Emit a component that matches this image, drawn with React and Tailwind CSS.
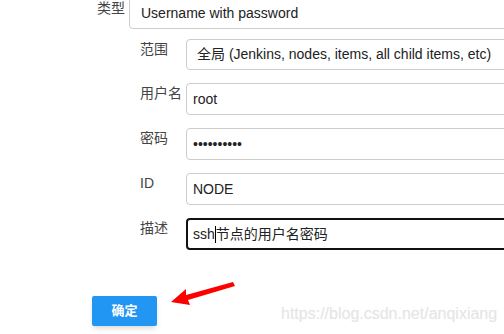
import React from "react";

const FieldRow = ({ label, children, boxClass = "", height = "h-[32px]" }) => {
  return (
    <div className="flex items-start">
      <div className="w-[46px] shrink-0 text-[14px] leading-[20px] text-[#444]">{label}</div>
      <div
        className={`w-[360px] shrink-0 ${height} flex items-center rounded-[4px] bg-white text-[14px] text-[#222] ${boxClass}`}
      >
        {children}
      </div>
    </div>
  );
};

const App = () => {
  return (
    <div
      className="relative w-[504px] h-[334px] overflow-hidden bg-white"
      style={{ fontFamily: '"Liberation Sans", "Noto Sans CJK SC", sans-serif' }}
    >
      <div className="pl-[92px]">
        {/* type row */}
        <div className="flex items-start gap-[4px] mt-[-3px]">
          <div className="w-[33px] shrink-0 pt-[1px] text-right text-[14px] leading-[20px] text-[#444]">类型</div>
          <div className="w-[420px] shrink-0 h-[32px] flex items-center pl-[11px] rounded-[4px] border border-[#ccc] text-[14px] text-[#222]">
            Username with password
          </div>
        </div>

        {/* credential fields */}
        <div className="ml-[48px] mt-[10px] flex flex-col gap-[13px]">
          <FieldRow label="范围" height="h-[31px]" boxClass="border border-[#ccc] pl-[10px]">
            全局 (Jenkins, nodes, items, all child items, etc)
          </FieldRow>
          <FieldRow label="用户名" boxClass="border border-[#ccc] pl-[6px]">
            root
          </FieldRow>
          <FieldRow label="密码" boxClass="border border-[#ccc] pl-[6px]">
            <span className="text-[14px] tracking-[0px]">••••••••••</span>
          </FieldRow>
          <FieldRow label="ID" boxClass="border border-[#ccc] pl-[6px]">
            NODE
          </FieldRow>
          <FieldRow label="描述" boxClass="border-2 border-[#111] pl-[5px]">
            ssh
            <span className="inline-block w-px h-[17px] bg-black" />
            节点的用户名密码
          </FieldRow>
        </div>

        <button className="mt-[46px] w-[65px] h-[30px] rounded-[2px] bg-[#2196f3] shadow-md text-[13px] font-bold text-white">
          确定
        </button>
      </div>

      {/* annotation arrow */}
      <svg className="absolute left-0 top-0 pointer-events-none" width="504" height="334">
        <polygon
          points="171,302 186,289 186,295 233,282 235,286 188,300 190,305"
          fill="#ff0000"
        />
      </svg>

      {/* watermark */}
      <div className="absolute left-[281px] top-[306px] text-[16px] leading-[16px] text-[#e6e6e6] [text-shadow:0_0_1px_#f2f2f2]">
        https://blog.csdn.net/anqixiang
      </div>
    </div>
  );
};

export default App;
